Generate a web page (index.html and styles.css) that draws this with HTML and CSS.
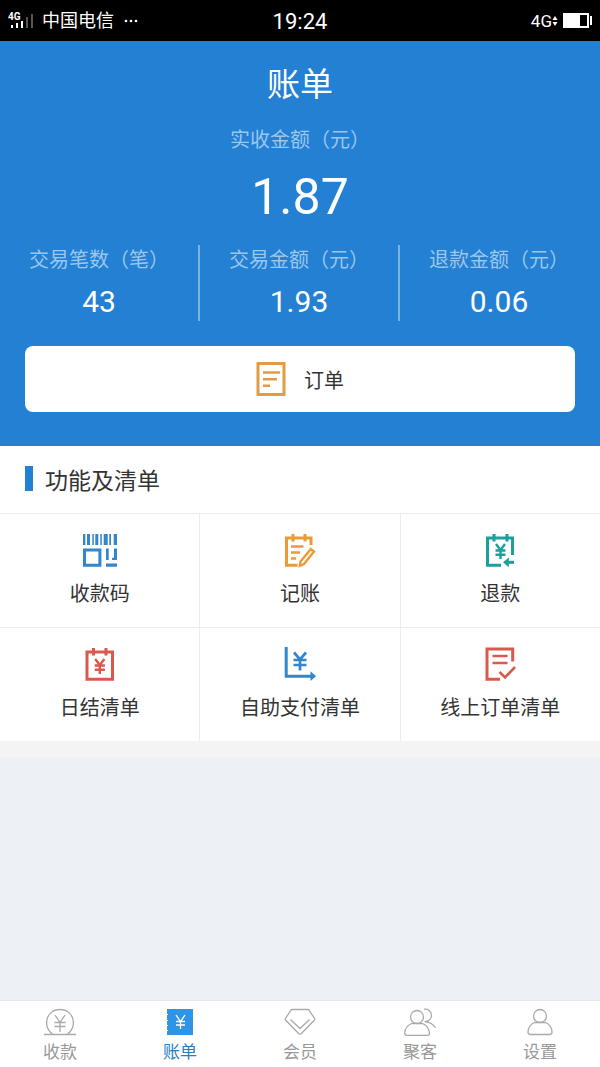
FILE: index.html
```
<!DOCTYPE html>
<html lang="zh-CN">
<head>
<meta charset="utf-8">
<meta name="viewport" content="width=device-width, initial-scale=1">
<title>账单</title>
<link rel="stylesheet" href="styles.css">
</head>
<body>
<div class="status">
  <div class="status-side">
    <svg class="signal" width="28" height="20" viewBox="0 0 28 20" aria-hidden="true">
      <text class="signal-text" x="0" y="9">4G</text>
      <g fill="#fff"><rect x="3" y="14" width="2" height="3"/><rect x="8" y="12" width="2" height="5"/><rect x="13" y="10" width="2" height="7"/></g>
      <g fill="#555"><rect x="18" y="6" width="2" height="11"/><rect x="23" y="3" width="2" height="14"/></g>
    </svg>
    <span class="carrier">中国电信</span>
    <svg class="dots" width="14" height="4" viewBox="0 0 14 4" fill="#fff" aria-hidden="true"><circle cx="2" cy="2" r="1.3"/><circle cx="7" cy="2" r="1.3"/><circle cx="12" cy="2" r="1.3"/></svg>
  </div>
  <time class="clock">19:24</time>
  <div class="status-side status-right">
    <span class="net">4G</span>
    <svg width="6" height="12" viewBox="0 0 6 12" fill="#fff" aria-hidden="true"><path d="M3 1 5.500 5H.5zM3 11 5.500 7H.5z"/></svg>
    <svg class="battery" width="29" height="15" viewBox="0 0 29 15" aria-hidden="true"><path fill="#fff" d="M0 0h26v15H0z"/><path d="M17 2h7v11h-7z"/><path fill="#fff" d="M27 3h2v9h-2z"/></svg>
  </div>
</div>

<header class="hero">
  <h1 class="title">账单</h1>
  <p class="label">实收金额（元）</p>
  <p class="total">1.87</p>
  <dl class="stats">
    <div class="stat"><dt class="label">交易笔数（笔）</dt><dd class="value">43</dd></div>
    <div class="stat"><dt class="label">交易金额（元）</dt><dd class="value">1.93</dd></div>
    <div class="stat"><dt class="label">退款金额（元）</dt><dd class="value">0.06</dd></div>
  </dl>
  <button class="order" type="button">
    <svg width="30" height="34" viewBox="0 0 30 34" fill="none" stroke="#e39a42" aria-hidden="true"><path stroke-width="3" d="M2 1.500h26v31H2z"/><path stroke-width="2.600" d="M7 10.500h17M7 17.200h14M7 23.800h7"/></svg>
    <span>订单</span>
  </button>
</header>

<main class="main">
  <section class="panel">
    <h2 class="heading">功能及清单</h2>
    <div class="grid">
      <button class="cell" type="button">
        <svg class="icon blue" viewBox="0 0 36 36" aria-hidden="true"><path class="solid" d="M1 1h2.300v11H1zM5 1h3v11H5zM10.300 1h1.500v11h-1.500zM13.300 1h3v11h-3zM18.300 1h1.500v11h-1.500zM21.700 1h4v11h-4zM27.300 1h1.700v11h-1.700zM31.700 1H35v11h-3.300zM24 15.500h2.700v11.500H24zM32 15.500h3V27h-5v-2.300h2zM24 30.500h11v3.200H24z"/><path d="M2.500 17h15.400v15.200H2.500z"/></svg>
        <span>收款码</span>
      </button>
      <button class="cell" type="button">
        <svg class="icon orange" viewBox="0 0 36 36" aria-hidden="true"><path d="M15.500 32.300H4.500V5h24.500v7M11 1v7.500M23 1v7.500"/><path stroke-width="2.400" d="M9 13.500h12.500M9 19.500h9M9 25.500h5M28.800 16.200l3.200 2.300-10 12.500-4.200 1.800.7-4.300z"/></svg>
        <span>记账</span>
      </button>
      <button class="cell" type="button">
        <svg class="icon teal" viewBox="0 0 36 36" aria-hidden="true"><path d="M19 32.300H5.500V5h25v17M12 1v7.500M25 1v7.500"/><path stroke-width="2.400" d="m14 11 4.500 6 4.500-6M18.500 17v9M13.500 17.500h10M13.500 21.800h10"/><path d="M25 29.300h7"/><path class="solid" d="m21 29.300 5.800-4.900v9.800z"/></svg>
        <span>退款</span>
      </button>
      <button class="cell" type="button">
        <svg class="icon red" viewBox="0 0 36 36" aria-hidden="true"><path d="M5 5h25.500v27.300H5zM11.500 1v7.500M24 1v7.500"/><path stroke-width="2.400" d="m13.200 12 4.600 6 4.600-6M17.800 18v9M12.700 18.500h10.200M12.700 22.700h10.200"/></svg>
        <span>日结清单</span>
      </button>
      <button class="cell" type="button">
        <svg class="icon blue" viewBox="0 0 36 36" aria-hidden="true"><path d="M4.200 0v29.200H30"/><path class="solid" d="M28.500 24.300v9.800l5.500-4.900z"/><path stroke-width="2.700" d="m12 5.500 6 7 6-7M18 12.500v11M11.500 13h13M11.500 18h13"/></svg>
        <span>自助支付清单</span>
      </button>
      <button class="cell" type="button">
        <svg class="icon red" viewBox="0 0 36 36" aria-hidden="true"><path d="M18 32.300H5V2h25.700v12.500"/><path stroke-width="2.600" d="M10.500 9h15M10.500 16h15M17.500 25l5.500 5.500L33 20"/></svg>
        <span>线上订单清单</span>
      </button>
    </div>
  </section>
</main>

<nav class="tabs">
  <a class="tab" href="#collect">
    <svg viewBox="0 0 34 28" aria-hidden="true"><path d="M1 26.500h32M9.500 26C-.5 19.500 2.500 1.500 17 1.500S34.500 19.500 24.500 26M12 7l5 7.500L22 7M17 14.500v9.500M11.500 14.500h11M11.500 18.500h11"/></svg>
    <span>收款</span>
  </a>
  <a class="tab active" href="#bill" aria-current="page">
    <svg viewBox="0 0 34 28" aria-hidden="true"><path fill="#2f93e6" stroke="none" d="M5 1h25v26H4v-4h1v-1H4v-4h1v-1H4v-4h1v-1H4V7h1V6H4V1z"/><path stroke="#fff" d="m13 7 4.500 6.500L22 7M17.500 13.500V21M13 13.500h9M13 17h9"/></svg>
    <span>账单</span>
  </a>
  <a class="tab" href="#member">
    <svg viewBox="0 0 34 28" aria-hidden="true"><path d="M9.500 1.500h15q1 0 1.700.8l5.300 8q.8 1-.2 2L18.200 25.700q-1.200 1-2.400 0L2.700 12.300q-1-1-.2-2l5.300-8q.7-.8 1.700-.8zM7.500 11.500l9.500 9 9.500-9"/></svg>
    <span>会员</span>
  </a>
  <a class="tab" href="#guests">
    <svg viewBox="0 0 34 28" aria-hidden="true"><circle cx="14" cy="9" r="6.500"/><path d="M8.500 15.500h11c5 2 6.500 6 7 9.500q0 2.300-2 2.300H4q-2.300 0-2.300-2.300C2 21.500 4 17.500 8.500 15.500zM21 1.200c4-.8 7.500 2 7.500 6s-2.500 6-7 6.500c5 .5 8.500 2 11 6.300"/></svg>
    <span>聚客</span>
  </a>
  <a class="tab" href="#settings">
    <svg viewBox="0 0 34 28" aria-hidden="true"><circle cx="17" cy="8" r="6.500"/><path d="M11.500 14.500h11c4.500 2 6.300 5.500 6.500 9.500q0 2.500-2.300 2.500H7.300Q5 26.500 5 24c.2-4 2-7.500 6.500-9.500z"/></svg>
    <span>设置</span>
  </a>
</nav>
</body>
</html>
```
FILE: styles.css
```
* { box-sizing: border-box; }
body {
  margin: 0;
  min-height: 100vh;
  display: flex;
  flex-direction: column;
  background: #edf1f6;
  color: #333;
  font-family: Roboto, "Noto Sans CJK SC", sans-serif;
}
h1, h2, p, dl, dd { margin: 0; font-weight: 400; }
button { border: 0; font: inherit; color: inherit; cursor: pointer; }

.status {
  display: grid;
  grid-template-columns: 1fr auto 1fr;
  align-items: center;
  height: 41px;
  padding: 0 8px;
  background: #000;
  color: #fff;
}
.status-side { display: flex; align-items: center; }
.status-right { justify-content: flex-end; }
.signal-text { fill: #fff; font-size: 10px; font-weight: 700; }
.carrier { margin-left: 6px; font-size: 18px; line-height: 24px; }
.dots { margin-left: 10px; }
.clock { padding-top: 2px; font-size: 22px; }
.net { font-size: 17px; }
.battery { margin-left: 5px; }

.hero {
  padding: 22px 0 34px;
  background: #2380d3;
  color: #fff;
  text-align: center;
}
.title { font-size: 33px; line-height: 44px; }
.label { color: #9bc6ed; font-size: 20px; line-height: 28px; }
.title + .label { margin-top: 19px; }
.total { margin-top: 13px; font-size: 50px; line-height: 60px; }
.stats { display: grid; grid-template-columns: repeat(3, 1fr); margin-top: 18px; }
.stat { height: 76px; padding-top: 1px; border-right: 2px solid #7bb3e5; }
.stat:last-child { border-right-color: transparent; }
.value { margin-top: 10px; font-size: 30px; line-height: 36px; }
.order {
  display: flex;
  align-items: center;
  justify-content: center;
  gap: 18px;
  width: calc(100% - 50px);
  height: 66px;
  margin: 25px 25px 0;
  border-radius: 8px;
  background: #fff;
  color: #333;
  font-size: 20px;
}

.main { flex: 1; }
.panel { border-bottom: 16px solid #f4f4f4; background: #fff; }
.heading {
  display: flex;
  align-items: center;
  gap: 12px;
  height: 67px;
  padding: 0 25px 2px;
  font-size: 23px;
}
.heading::before { content: ""; width: 8px; height: 25px; background: #2380d3; }
.grid {
  display: grid;
  grid-template-columns: repeat(3, 1fr);
  gap: 1px;
  padding-top: 1px;
  background: #ededed;
}
.cell {
  display: flex;
  flex-direction: column;
  align-items: center;
  gap: 11px;
  height: 113px;
  padding: 19px 0 0;
  background: #fff;
  font-size: 20px;
  line-height: 28px;
}
.icon { width: 36px; height: 36px; fill: none; stroke: currentColor; stroke-width: 3; }
.solid { fill: currentColor; stroke: none; }
.blue { color: #3186cc; }
.orange { color: #eb9a34; }
.teal { color: #1d9f9b; }
.red { color: #da584e; }

.tabs {
  display: grid;
  grid-template-columns: repeat(5, 1fr);
  height: 67px;
  border-top: 1px solid #e6e9ec;
  background: #fff;
}
.tab {
  display: flex;
  flex-direction: column;
  align-items: center;
  gap: 4px;
  padding-top: 7px;
  color: #999;
  font-size: 17px;
  line-height: 24px;
  text-decoration: none;
}
.tab svg { width: 34px; height: 28px; fill: none; stroke: #aaa; stroke-width: 1.300; }
.active { color: #2380c8; }
```
